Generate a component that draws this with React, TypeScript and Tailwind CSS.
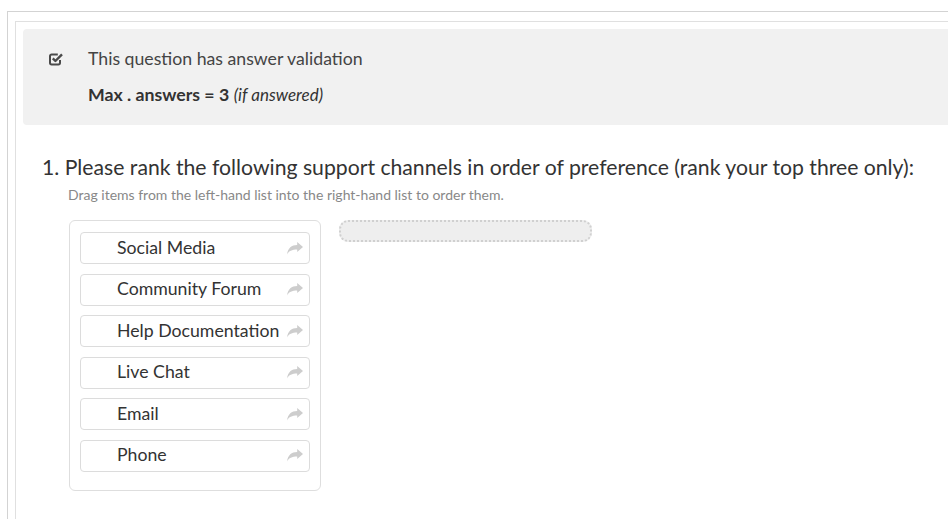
import React from 'react';

const options = ['Social Media', 'Community Forum', 'Help Documentation', 'Live Chat', 'Email', 'Phone'];

const CheckSquare = () => (
  <svg width="15" height="14" viewBox="0 0 15 14" fill="none" className="block">
    <path d="M11 8v2.8a1.6 1.6 0 0 1-1.6 1.6H2.6A1.6 1.6 0 0 1 1 10.8V4.2a1.6 1.6 0 0 1 1.6-1.6h6.2" stroke="#4a4a4a" strokeWidth="2" />
    <path d="M3.8 6.4l2.6 2.6 6.6-6.6" stroke="#4a4a4a" strokeWidth="2.4" strokeLinejoin="round" />
  </svg>
);

// curved "move to other list" arrow
const ShareArrow = () => (
  <svg width="16" height="13" viewBox="0 0 16 13" className="block shrink-0">
    <path d="M16 5L10.2 0v3C4.5 3 1 6 0 12.5c1.8-3.6 5-5 10.2-5V10z" fill="#cdcdcd" />
  </svg>
);

export default function App() {
  return (
    <div className="min-h-screen bg-white pl-[7px] pt-[11px] text-[#333]" style={{ fontFamily: 'Lato, "Open Sans", sans-serif' }}>
      <div className="min-h-[508px] border-l border-t border-[#d3d3d3] pl-[7px] pt-[9px]">
        <div className="min-h-[498px] border-l border-t border-[#e0e0e0] pl-[7px] pt-[7px]">
          {/* validation notice */}
          <div className="flex h-[96px] flex-col rounded-l-[4px] bg-[#f1f1f1] pl-[26px] pt-[19px]">
            <div className="flex items-center">
              <CheckSquare />
              <span className="ml-[24px] text-[17.7px] leading-[22px] text-[#444]">This question has answer validation</span>
            </div>
            <div className="mt-[14px] pl-[39px] text-[17.7px] leading-[22px] text-[#333]">
              <span className="font-bold">Max . answers = 3</span>{' '}
              <i className="text-[17px]">(if answered)</i>
            </div>
          </div>

          {/* ranking question */}
          <div className="pl-[19px] pt-[29px]">
            <h2 className="text-[21.2px] leading-[26px] text-[#333]">
              1. Please rank the following support channels in order of preference (rank your top three only):
            </h2>
            <p className="mt-[6px] pl-[26px] text-[14px] leading-[18px] text-[#888]">
              Drag items from the left-hand list into the right-hand list to order them.
            </p>

            <div className="mt-[16px] flex items-start pl-[27px]">
              <ul className="flex w-[252px] flex-col gap-[9.5px] rounded-[6px] border border-[#dedede] px-[10px] pb-[18px] pt-[11px]">
                {options.map((o) => (
                  <li
                    key={o}
                    className="flex h-[32px] items-center justify-between rounded-[4px] border border-[#dcdcdc] bg-white pl-[36px] pr-[6px] text-[17.7px] text-[#333]"
                  >
                    <span className="whitespace-nowrap">{o}</span>
                    <ShareArrow />
                  </li>
                ))}
              </ul>

              <div className="ml-[18px] h-[22px] w-[253px] rounded-[9px] border-2 border-dotted border-[#d0d0d0] bg-[#eeeeee]" />
            </div>
          </div>
        </div>
      </div>
    </div>
  );
}
